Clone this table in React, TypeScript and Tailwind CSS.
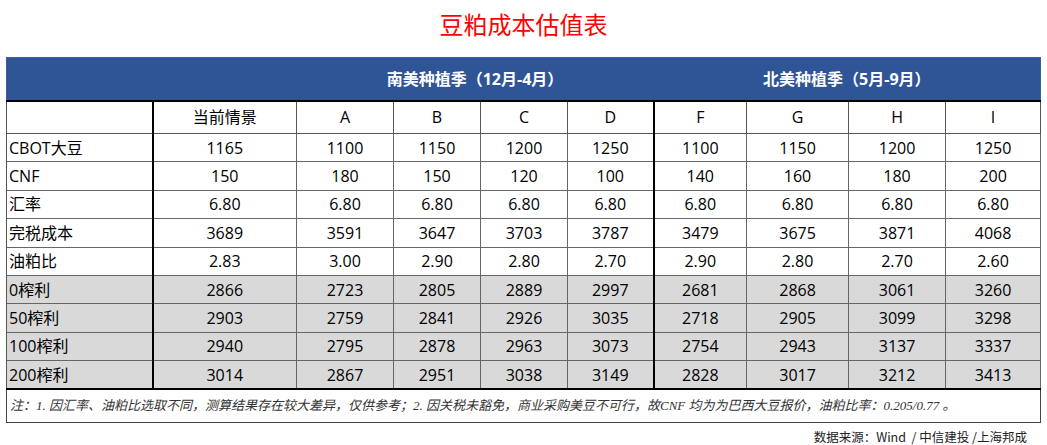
import * as React from "react";

// Soybean meal cost valuation table: two planting seasons, nine scenarios.
const COLS = ["当前情景", "A", "B", "C", "D", "F", "G", "H", "I"];
const WIDTHS = [146, 144, 97, 87, 87, 86, 93, 102, 97, 95];

const ROWS: { label: string; values: string[]; shaded?: boolean }[] = [
  { label: "CBOT大豆", values: ["1165", "1100", "1150", "1200", "1250", "1100", "1150", "1200", "1250"] },
  { label: "CNF", values: ["150", "180", "150", "120", "100", "140", "160", "180", "200"] },
  { label: "汇率", values: ["6.80", "6.80", "6.80", "6.80", "6.80", "6.80", "6.80", "6.80", "6.80"] },
  { label: "完税成本", values: ["3689", "3591", "3647", "3703", "3787", "3479", "3675", "3871", "4068"] },
  { label: "油粕比", values: ["2.83", "3.00", "2.90", "2.80", "2.70", "2.90", "2.80", "2.70", "2.60"] },
  { label: "0榨利", values: ["2866", "2723", "2805", "2889", "2997", "2681", "2868", "3061", "3260"], shaded: true },
  { label: "50榨利", values: ["2903", "2759", "2841", "2926", "3035", "2718", "2905", "3099", "3298"], shaded: true },
  { label: "100榨利", values: ["2940", "2795", "2878", "2963", "3073", "2754", "2943", "3137", "3337"], shaded: true },
  { label: "200榨利", values: ["3014", "2867", "2951", "3038", "3149", "2828", "3017", "3212", "3413"], shaded: true },
];

// column index (0 = label) whose right edge is drawn heavy
const heavyRight = (i: number) => i === 0 || i === 5;

export default function App() {
  return (
    <div
      className="w-[1047px] h-[445px] bg-white text-black overflow-hidden"
      style={{ fontFamily: '"Open Sans", "Noto Sans CJK SC", sans-serif' }}
    >
      <div className="h-[57px] flex items-start justify-center pt-[8px]">
        <h1
          className="text-[24px] leading-[32px] text-[#ff0000]"
          style={{ fontFamily: '"Noto Sans CJK SC", sans-serif' }}
        >
          豆粕成本估值表
        </h1>
      </div>

      <div className="pl-[6px]">
        <table className="border-collapse table-fixed w-[1034px]">
          <colgroup>
            {WIDTHS.map((w, i) => (
              <col key={i} style={{ width: w }} />
            ))}
          </colgroup>
          <thead>
            <tr className="h-[43px] bg-[#2f5597] text-white text-[16px] font-bold">
              <th className="border-l border-t border-[#3b5f99] border-b-2 border-b-black" colSpan={2} />
              <th className="border-t border-[#3b5f99] border-b-2 border-b-black" colSpan={4}>
                南美种植季（12月-4月）
              </th>
              <th className="border-t border-r border-[#3b5f99] border-b-2 border-b-black" colSpan={4}>
                北美种植季（5月-9月）
              </th>
            </tr>
            <tr className="h-[33px] text-[16px] font-normal">
              <th className="border-l border-l-[#555] border-b border-b-[#555] border-r-2 border-r-black" />
              {COLS.map((c, i) => (
                <th
                  key={c}
                  className={
                    "font-normal text-center border-b border-b-[#555] " +
                    (heavyRight(i + 1) ? "border-r-2 border-r-black" : "border-r border-r-[#555]")
                  }
                >
                  {c}
                </th>
              ))}
            </tr>
          </thead>
          <tbody className="text-[16px]">
            {ROWS.map((r, ri) => (
              <tr
                key={r.label}
                className={
                  "h-[28.4px] " +
                  (r.shaded ? "bg-[#d9d9d9] " : "") +
                  (ri === ROWS.length - 1 ? "border-b-2 border-b-black" : "border-b border-b-[#666]")
                }
              >
                <td className="pl-[2px] text-left leading-none border-l border-l-[#555] border-r-2 border-r-black">
                  {r.label}
                </td>
                {r.values.map((v, i) => (
                  <td
                    key={i}
                    className={
                      "text-center leading-none " +
                      (heavyRight(i + 1) ? "border-r-2 border-r-black" : "border-r border-r-[#666]")
                    }
                  >
                    {v}
                  </td>
                ))}
              </tr>
            ))}
            <tr className="h-[33px]">
              <td
                colSpan={10}
                className="px-[3px] text-[13px] italic text-[#333] border-l border-r border-b border-[#444]"
                style={{ fontFamily: '"Liberation Serif", "Noto Sans CJK SC", serif' }}
              >
                注：1. 因汇率、油粕比选取不同，测算结果存在较大差异，仅供参考；2. 因关税未豁免，商业采购美豆不可行，故CNF 均为为巴西大豆报价，油粕比率：0.205/0.77 。
              </td>
            </tr>
          </tbody>
        </table>
      </div>

      <div className="flex justify-end pr-[20px] pt-[5px]">
        <span className="text-[12.5px] text-[#222]" style={{ fontFamily: '"Noto Sans CJK SC", sans-serif' }}>
          数据来源：Wind &nbsp;/ 中信建投 /上海邦成
        </span>
      </div>
    </div>
  );
}
